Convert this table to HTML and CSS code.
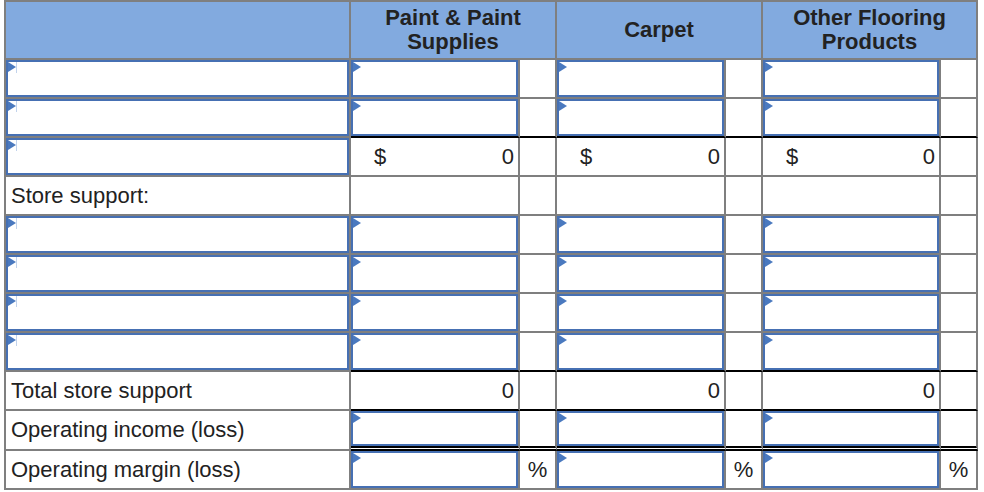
FILE: index.html
```html
<!DOCTYPE html>
<html lang="en">
<head>
<meta charset="utf-8">
<title>Segment income statement</title>
<link rel="stylesheet" href="styles.css">
</head>
<body>
<table class="sheet">
  <colgroup>
    <col class="c-label">
    <col class="c-in">
    <col class="c-nar">
    <col class="c-in">
    <col class="c-nar">
    <col class="c-in3">
    <col class="c-nar">
  </colgroup>
  <thead>
    <tr class="head">
      <th></th>
      <th colspan="2">Paint &amp; Paint<br>Supplies</th>
      <th colspan="2">Carpet</th>
      <th colspan="2">Other Flooring<br>Products</th>
    </tr>
  </thead>
  <tbody>
    <tr>
      <td class="in lab-in"></td>
      <td class="in"></td><td></td>
      <td class="in"></td><td></td>
      <td class="in"></td><td></td>
    </tr>
    <tr class="rule">
      <td class="in lab-in"></td>
      <td class="in v"></td><td class="v"></td>
      <td class="in v"></td><td class="v"></td>
      <td class="in v"></td><td class="v"></td>
    </tr>
    <tr>
      <td class="in lab-in"></td>
      <td><div class="money"><span>$</span><span>0</span></div></td><td></td>
      <td><div class="money"><span>$</span><span>0</span></div></td><td></td>
      <td><div class="money"><span>$</span><span>0</span></div></td><td></td>
    </tr>
    <tr>
      <td class="label">Store support:</td>
      <td></td><td></td>
      <td></td><td></td>
      <td></td><td></td>
    </tr>
    <tr>
      <td class="in lab-in"></td>
      <td class="in"></td><td></td>
      <td class="in"></td><td></td>
      <td class="in"></td><td></td>
    </tr>
    <tr>
      <td class="in lab-in"></td>
      <td class="in"></td><td></td>
      <td class="in"></td><td></td>
      <td class="in"></td><td></td>
    </tr>
    <tr>
      <td class="in lab-in"></td>
      <td class="in"></td><td></td>
      <td class="in"></td><td></td>
      <td class="in"></td><td></td>
    </tr>
    <tr class="rule">
      <td class="in lab-in"></td>
      <td class="in v"></td><td class="v"></td>
      <td class="in v"></td><td class="v"></td>
      <td class="in v"></td><td class="v"></td>
    </tr>
    <tr class="rule">
      <td class="label">Total store support</td>
      <td class="num v">0</td><td class="v"></td>
      <td class="num v">0</td><td class="v"></td>
      <td class="num v">0</td><td class="v"></td>
    </tr>
    <tr class="double">
      <td class="label">Operating income (loss)</td>
      <td class="in v"></td><td class="v"></td>
      <td class="in v"></td><td class="v"></td>
      <td class="in v"></td><td class="v"></td>
    </tr>
    <tr>
      <td class="label">Operating margin (loss)</td>
      <td class="in"></td><td class="pct">%</td>
      <td class="in"></td><td class="pct">%</td>
      <td class="in"></td><td class="pct">%</td>
    </tr>
  </tbody>
</table>
</body>
</html>
```

FILE: styles.css
```css
html, body {
  margin: 0;
  padding: 0;
  background: #ffffff;
}

body {
  font-family: "Liberation Sans", Arial, Helvetica, sans-serif;
  font-size: 22px;
  color: #222222;
}

.sheet {
  margin-left: 4px;
  width: 974px;
  table-layout: fixed;
  border-collapse: separate;
  border-spacing: 0;
  border-top: 2px solid #7f7f7f;
  border-left: 2px solid #7f7f7f;
}

.c-label { width: 345px; }
.c-in { width: 169px; }
.c-in3 { width: 178px; }
.c-nar { width: 37px; }

.sheet th,
.sheet td {
  box-sizing: border-box;
  padding: 0;
  border-right: 2px solid #7f7f7f;
  border-bottom: 2px solid #7f7f7f;
  vertical-align: middle;
}

.sheet tr { height: 39px; }

.sheet tr.head { height: 58px; }

.sheet tr.head th {
  background: #82aadf;
  font-weight: bold;
  font-size: 22px;
  line-height: 24px;
  text-align: center;
  color: #222222;
}

.sheet tr.rule td.v {
  border-bottom-color: #000000;
}

.sheet tr.double { height: 40px; }

.sheet tr.double td.v {
  border-bottom: 5px double #000000;
}

.sheet td.in {
  position: relative;
  box-shadow: inset 0 0 0 2px #4670b3;
}

.sheet td.in::before {
  content: "";
  position: absolute;
  left: 2px;
  top: 2px;
  width: 0;
  height: 0;
  border-left: 8px solid #4a79bf;
  border-top: 5px solid transparent;
  border-bottom: 5px solid transparent;
}

.sheet td.lab-in::after {
  content: "";
  position: absolute;
  left: 10px;
  top: 2px;
  width: 1px;
  height: 11px;
  background: #c2d3ec;
}

.sheet td.label {
  padding-left: 5px;
  white-space: nowrap;
}

.money {
  display: flex;
  justify-content: space-between;
  padding: 0 4px 0 23px;
}

.sheet td.num {
  text-align: right;
  padding-right: 4px;
}

.sheet td.pct {
  text-align: center;
}
```
